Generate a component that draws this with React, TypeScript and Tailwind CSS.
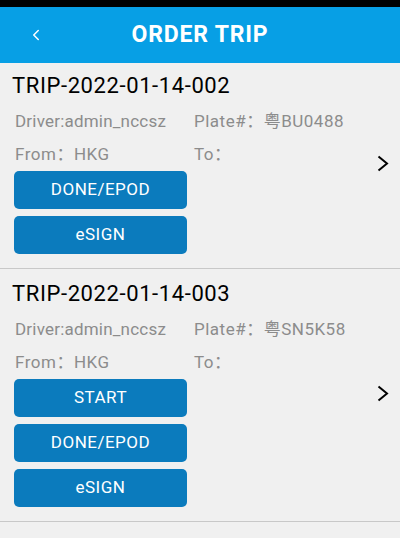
import { ChevronLeft } from "lucide-react"

interface Trip {
  no: string
  driver: string
  plate: string
  from: string
  to: string
  actions: string[]
}

const TRIPS: Trip[] = [
  {
    no: "TRIP-2022-01-14-002",
    driver: "admin_nccsz",
    plate: "粤BU0488",
    from: "HKG",
    to: "",
    actions: ["DONE/EPOD", "eSIGN"],
  },
  {
    no: "TRIP-2022-01-14-003",
    driver: "admin_nccsz",
    plate: "粤SN5K58",
    from: "HKG",
    to: "",
    actions: ["START", "DONE/EPOD", "eSIGN"],
  },
]

function TripItem({ trip, first }: { trip: Trip; first: boolean }) {
  return (
    <div
      className={`flex items-center border-b border-[#c8c8c8] pb-[14px] pl-3 pr-[11px] ${
        first ? "pt-[9px]" : "pt-[11px]"
      }`}
    >
      <div className="flex-1">
        <div className="text-[22px] leading-7 text-black tracking-[0.6px]">{trip.no}</div>
        {/* info rows */}
        <div className="mt-[9px] grid grid-cols-[179px_1fr] gap-y-[9px] pl-[3px] text-[17px] leading-6 text-[#8c8c8c]">
          <div className="tracking-[0.2px]">Driver:{trip.driver}</div>
          <div className="tracking-[0.5px]">Plate#：{trip.plate}</div>
          <div className="tracking-[0.5px]">From：{trip.from}</div>
          <div className="tracking-[0.5px]">To：{trip.to}</div>
        </div>
        <div className="mt-[5px] flex w-[173px] flex-col gap-[7px] pl-[2px]">
          {trip.actions.map((a) => (
            <button
              key={a}
              className="h-[38px] w-[173px] rounded-[5px] bg-[#0b7bbd] text-[17px] tracking-[0.5px] text-white"
            >
              {a}
            </button>
          ))}
        </div>
      </div>
      <svg width="12" height="17" viewBox="0 0 12 17" fill="none">
        <polyline points="1.5,1.5 10,8.5 1.5,15.5" stroke="#000" strokeWidth="2" />
      </svg>
    </div>
  )
}

export default function App() {
  return (
    <div
      className="h-[538px] w-[400px] overflow-hidden bg-[#f0f0f0]"
      style={{ fontFamily: "Roboto, 'Noto Sans CJK SC', sans-serif" }}
    >
      <div className="h-[7px] bg-black" />
      <div className="relative flex h-[56px] items-center justify-center bg-[#079fe5]">
        <ChevronLeft className="absolute left-[27px] h-[18px] w-[18px] text-white" strokeWidth={2} />
        <span className="text-[23px] font-bold tracking-[0.8px] text-white">ORDER TRIP</span>
      </div>
      {TRIPS.map((t, i) => (
        <TripItem key={t.no} trip={t} first={i === 0} />
      ))}
    </div>
  )
}
